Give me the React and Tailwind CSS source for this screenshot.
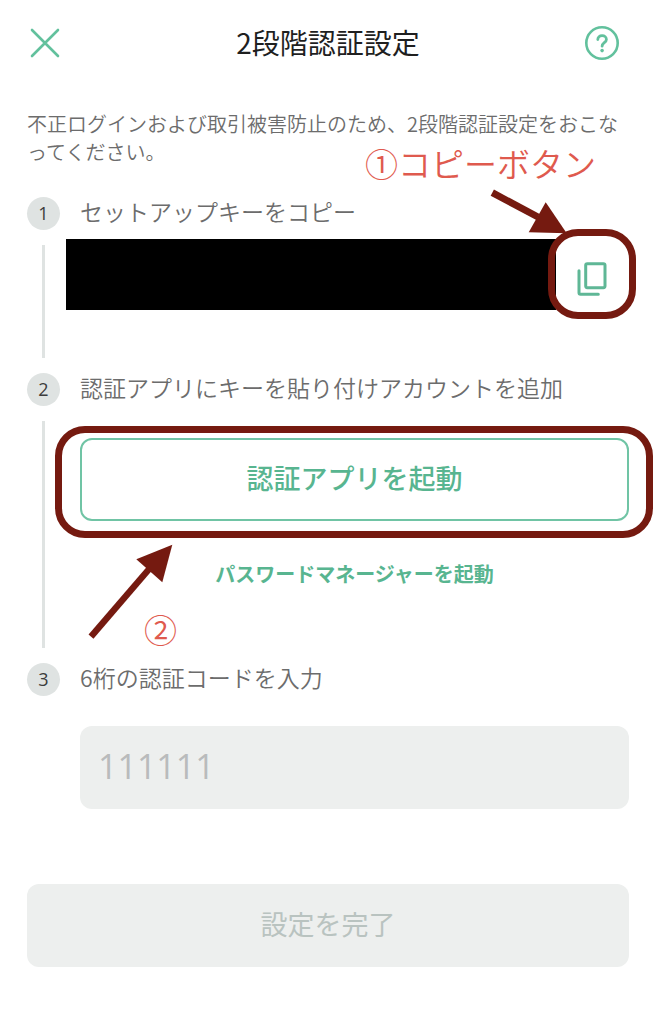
const Step = ({ number, title, htmlFor, last, children }) => (
  <li className="flex gap-5">
    <div className="flex w-[33px] shrink-0 flex-col items-center">
      <span className="flex h-[33px] w-[33px] items-center justify-center rounded-full bg-[#dfe3e2] pb-0.5 font-['Open_Sans',sans-serif] text-lg leading-6 text-[#3c3c3c]">
        {number}
      </span>
      {!last && <span className="my-[15px] w-[3px] flex-1 bg-[#dfe3e2]" />}
    </div>
    <div className="min-w-0 flex-1">
      <h2 className="h-8 text-[23px] leading-[28px] font-[350] whitespace-nowrap text-[#6c6c6c]">
        {htmlFor ? <label htmlFor={htmlFor}>{title}</label> : title}
      </h2>
      {children}
    </div>
  </li>
);

const Callout = ({ className, children }) => (
  <span className={`pointer-events-none absolute text-[33px] leading-9 font-[350] whitespace-nowrap text-[#df5a4e] ${className}`}>
    {children}
  </span>
);

const Highlight = ({ className }) => (
  <span className={`pointer-events-none absolute border-[7px] border-[#751a10] ${className}`} />
);

const CloseIcon = () => (
  <svg width="36" height="36" viewBox="0 0 36 36" fill="none" stroke="#62c19d" strokeWidth="2.6" strokeLinecap="round">
    <path d="M5 5 31 31M31 5 5 31" />
  </svg>
);

const HelpIcon = () => (
  <svg width="36" height="36" viewBox="0 0 36 36" fill="none" stroke="#62c19d" strokeLinecap="round">
    <circle cx="18" cy="18" r="15.7" strokeWidth="2.6" />
    <path d="M13.8 14.6c0-2.4 1.8-4 4.3-4s4.3 1.6 4.3 3.8c0 3.2-4.3 3.4-4.3 6.8" strokeWidth="2.8" />
    <circle cx="18.1" cy="25.6" r="1.8" fill="#62c19d" stroke="none" />
  </svg>
);

const CopyIcon = () => (
  <svg width="32" height="34" viewBox="0 0 32 34" fill="none" stroke="#5fb796" strokeWidth="3" strokeLinecap="round" strokeLinejoin="round">
    <rect x="8.7" y="1.7" width="19.3" height="24" rx="1.6" />
    <path d="M2 8.8v22a1.5 1.5 0 0 0 1.5 1.5h17.8" />
  </svg>
);

export default function App() {
  return (
    <main className="min-h-screen bg-white px-[27px] pt-[25px] pb-14 font-['Noto_Sans_CJK_JP',sans-serif]">
      <header className="flex h-9 items-center justify-between">
        <button type="button" aria-label="閉じる" className="flex w-[54px] justify-start">
          <CloseIcon />
        </button>
        <h1 className="pb-0.5 text-[28px] leading-9 font-normal text-[#1f1f1f]">2段階認証設定</h1>
        <button type="button" aria-label="ヘルプ" className="flex w-[54px] justify-center">
          <HelpIcon />
        </button>
      </header>

      <p className="mt-[49px] text-xl leading-7 font-[350] break-all text-[#6c6c6c]">
        不正ログインおよび取引被害防止のため、2段階認証設定をおこなってください。
      </p>

      <ol className="mt-[31px]">
        <Step number={1} title="セットアップキーをコピー">
          <div className="mt-[10px] -ml-[14px] flex items-start pb-[54px]">
            {/* setup key, blacked out */}
            <div className="h-[71px] flex-1 bg-black" />
            <div className="relative w-[73px]">
              <button type="button" aria-label="コピー" className="flex h-20 w-full items-center justify-center">
                <CopyIcon />
              </button>
              <Highlight className="-top-[10px] -right-[7px] bottom-0 -left-2 rounded-[30px]" />
              <Callout className="-top-[94px] right-[33px]">①コピーボタン</Callout>
              <svg className="pointer-events-none absolute -top-[51px] right-[61px]" width="80" height="48" viewBox="0 0 80 48">
                <path d="M4.3 4.7 50 29" stroke="#751a10" strokeWidth="7" />
                <path d="M78.7 45.3 57.7 14.3 40.7 44.3Z" fill="#751a10" />
              </svg>
            </div>
          </div>
        </Step>

        <Step number={2} title="認証アプリにキーを貼り付けアカウントを追加">
          <div className="relative mt-[33px]">
            <button
              type="button"
              className="h-[83px] w-full rounded-xl border-2 border-[#70c4a5] pb-1 text-[27px] leading-9 font-medium text-[#58b590]"
            >
              認証アプリを起動
            </button>
            <Highlight className="-top-3 -right-6 -bottom-[17px] -left-[25px] rounded-[30px]" />
            <svg className="pointer-events-none absolute top-[104px] left-[6px]" width="90" height="100" viewBox="0 0 90 100">
              <path d="M5 94.7 64 26" stroke="#751a10" strokeWidth="6.5" />
              <path d="M86.3 2.7 50.3 17.3 76.3 40.3Z" fill="#751a10" />
            </svg>
            <Callout className="top-[173px] left-16">②</Callout>
          </div>
          <div className="mt-[38px] pb-[74px] text-center">
            <a href="#password-manager" className="block text-xl leading-[30px] font-bold text-[#58b590]">
              パスワードマネージャーを起動
            </a>
          </div>
        </Step>

        <Step number={3} title="6桁の認証コードを入力" htmlFor="code" last>
          <input
            id="code"
            type="text"
            inputMode="numeric"
            maxLength={6}
            placeholder="111111"
            className="mt-[31px] block h-[83px] w-full rounded-xl bg-[#edefee] px-[18px] pb-1 font-['Open_Sans',sans-serif] text-[34px] text-[#3c3c3c] placeholder:text-[#b9bbbc]"
          />
        </Step>
      </ol>

      <button
        type="button"
        disabled
        className="mt-[75px] h-[83px] w-full rounded-xl bg-[#edefee] pb-1 text-[27px] leading-9 font-normal text-[#b9c3c0]"
      >
        設定を完了
      </button>
    </main>
  );
}
